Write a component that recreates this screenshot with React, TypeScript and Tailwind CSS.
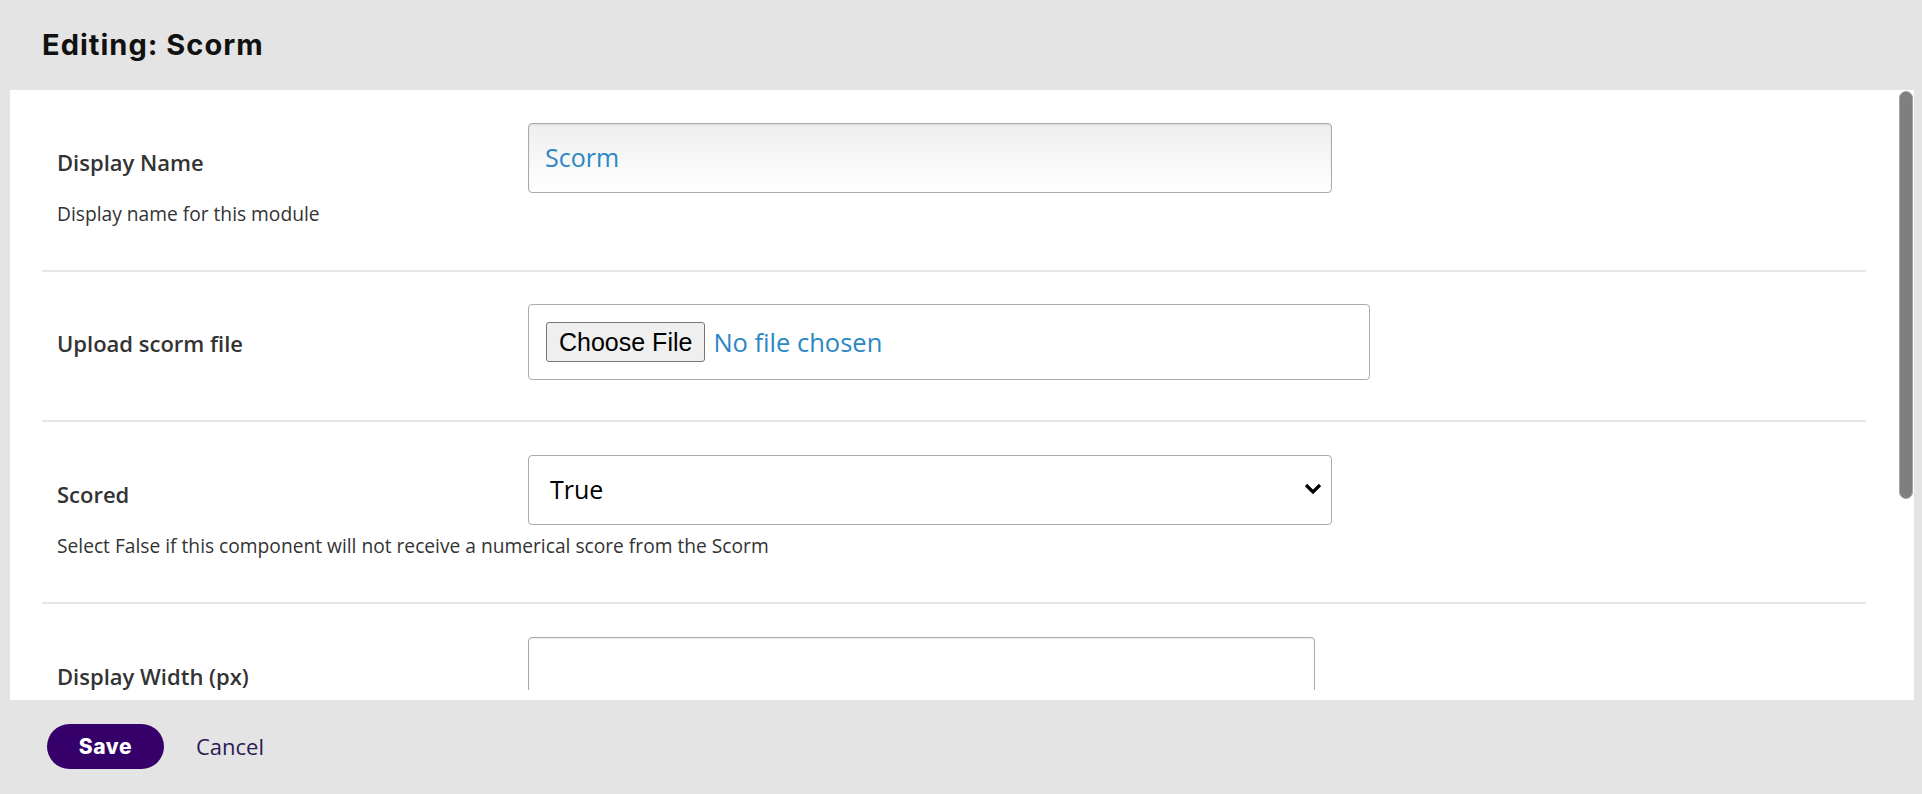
import React from 'react';

const Row = ({ label, desc, children, pt = 'pt-[33px]', pb = 'pb-[43px]', last = false }: any) => (
  <div className={`flex px-[15px] ${pt} ${pb} ${last ? '' : 'border-b-2 border-[#e6e6e6]'}`}>
    <div className="w-[471px] shrink-0">
      <div className="mt-[24px] text-[22px] leading-[30px] font-semibold text-[#333] whitespace-nowrap">{label}</div>
      {desc && (
        <div className="mt-[24px] text-[19.2px] leading-[26px] text-[#333] whitespace-nowrap">{desc}</div>
      )}
    </div>
    <div>{children}</div>
  </div>
);

const App = () => {
  return (
    <div className="h-[794px] flex flex-col bg-[#e4e4e4] font-['Open_Sans',sans-serif] overflow-hidden">
      {/* Header */}
      <div className="h-[90px] shrink-0 flex items-center pl-[42px]">
        <h1 className="font-['Inter',sans-serif] font-bold text-[29px] tracking-[0.035em] text-[#111]">
          Editing: Scorm
        </h1>
      </div>

      {/* Panel */}
      <div className="relative ml-[10px] mr-[8px] bg-white pb-[10px] shrink-0">
        <div className="h-[600px] overflow-hidden">
          <div className="pl-[32px] pr-[48px]">
            {/* Display Name */}
            <Row label="Display Name" desc="Display name for this module">
              <div className="w-[804px] h-[70px] border border-[#aaa] rounded-[4px] bg-linear-to-b from-[#eeeeee] to-white shadow-[inset_0_1px_2px_rgba(0,0,0,0.08)] flex items-center pl-[16px]">
                <span className="text-[25px] text-[#2b87c4]">Scorm</span>
              </div>
            </Row>

            {/* Upload */}
            <Row label="Upload scorm file" pt="pt-[32px]" pb="pb-[40px]">
              <div className="w-[842px] h-[76px] border border-[#aaa] rounded-[4px] bg-white flex items-center pl-[17px] gap-[8px]">
                <button className="h-[40px] px-[12px] bg-[#efefef] border border-[#767676] rounded-[3px] font-['Liberation_Sans',sans-serif] text-[25px] text-black leading-none">
                  Choose File
                </button>
                <span className="text-[25.5px] text-[#2b87c4]">No file chosen</span>
              </div>
            </Row>

            {/* Scored */}
            <Row label="Scored" desc="Select False if this component will not receive a numerical score from the Scorm">
              <div className="relative w-[804px] h-[70px]">
                <select
                  defaultValue="True"
                  className="appearance-none w-full h-full border border-[#aaa] rounded-[4px] bg-white pl-[21px] text-[25px] text-black font-['Open_Sans',sans-serif]"
                >
                  <option>True</option>
                  <option>False</option>
                </select>
                <svg
                  className="absolute right-[10px] top-[28px] pointer-events-none"
                  width="18"
                  height="12"
                  viewBox="0 0 18 12"
                >
                  <polyline points="2,2 9,9 16,2" fill="none" stroke="#000" strokeWidth="3.2" />
                </svg>
              </div>
            </Row>

            {/* Display Width */}
            <Row label="Display Width (px)" pb="pb-[40px]" last>
              <div className="w-[787px] h-[70px] border border-[#aaa] rounded-[4px] bg-white shadow-[inset_0_1px_2px_rgba(0,0,0,0.08)]" />
            </Row>
          </div>
        </div>

        {/* scrollbar thumb */}
        <div className="absolute right-[1px] top-[1px] w-[14px] h-[408px] rounded-full bg-[#7f7f7f] border border-[#a5a5a5]" />
      </div>

      {/* Footer */}
      <div className="flex-1 flex items-start pt-[24px] pl-[47px]">
        <button className="w-[117px] h-[45px] rounded-full bg-[#36006b] text-white font-['Inter',sans-serif] font-extrabold text-[21px] tracking-[0.03em]">
          Save
        </button>
        <button className="ml-[32px] h-[45px] text-[22px] text-[#2b1a52]">Cancel</button>
      </div>
    </div>
  );
};

export default App;
